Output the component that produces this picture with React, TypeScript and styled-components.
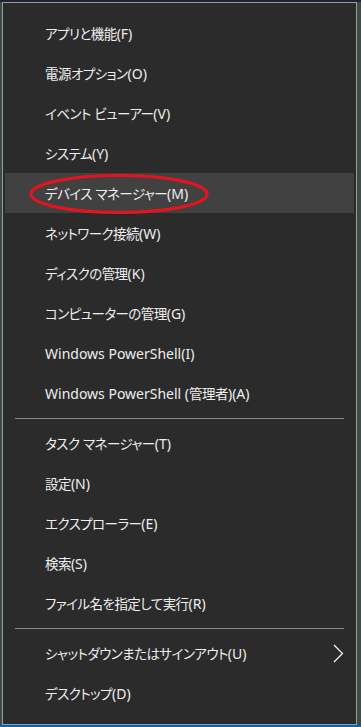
import React from "react";
import styled, { createGlobalStyle } from "styled-components";

const Global = createGlobalStyle`
  html, body { margin: 0; padding: 0; }
  body {
    background: #3f4b45;
    width: 361px;
    height: 727px;
    overflow: hidden;
    font-family: "Noto Sans", "Noto Sans CJK JP", sans-serif;
  }
`;

const Screen = styled.div`
  width: 361px;
  height: 727px;
  box-sizing: border-box;
  padding: 2px 4px 2px 2px;
  background: linear-gradient(to bottom, #1c2430 0, #1c2430 2px, #3f4b45 2px, #3f4b45 725px, #0a63b5 725px);
`;

const Menu = styled.div`
  position: relative;
  box-sizing: border-box;
  width: 355px;
  height: 723px;
  background: #2b2b2b;
  border: 1px solid #9a9a9a;
  padding: 10px 2px 11px 2px;
  display: flex;
  flex-direction: column;
`;

const Item = styled.div<{ $active?: boolean }>`
  height: 40px;
  flex: 0 0 40px;
  display: flex;
  align-items: center;
  justify-content: space-between;
  padding: 0 10px 0 40px;
  background: ${(p) => (p.$active ? "#414141" : "transparent")};
  color: #eeeeee;
  font-size: 14px;
  white-space: nowrap;
`;

const Cjk = styled.span`
  font-family: "Noto Sans CJK JP", sans-serif;
  font-size: 13.5px;
  letter-spacing: -0.55px;
  font-feature-settings: "palt" 1;
`;

const Separator = styled.div`
  flex: 0 0 10px;
  display: flex;
  align-items: center;
  padding: 0 10px 0 10px;
  &::after {
    content: "";
    flex: 1;
    height: 1px;
    background: #8a8a8a;
  }
`;

const Annotation = styled.svg`
  position: absolute;
  left: 24px;
  top: 167px;
  pointer-events: none;
`;

const Chevron = () => (
  <svg width="11" height="19" viewBox="0 0 11 19" fill="none">
    <path d="M1 1 L9.5 9.5 L1 18" stroke="#ffffff" strokeWidth="1.2" />
  </svg>
);

const Label = ({ text }: { text: string }) => (
  <span>
    {text.split(/([\u3000-\u9fff\uff00-\uffef]+)/).map((part, i) =>
      i % 2 === 1 ? <Cjk key={i}>{part}</Cjk> : <React.Fragment key={i}>{part}</React.Fragment>
    )}
  </span>
);

const groups: string[][] = [
  [
    "アプリと機能(F)",
    "電源オプション(O)",
    "イベント ビューアー(V)",
    "システム(Y)",
    "デバイス マネージャー(M)",
    "ネットワーク接続(W)",
    "ディスクの管理(K)",
    "コンピューターの管理(G)",
    "Windows PowerShell(I)",
    "Windows PowerShell (管理者)(A)",
  ],
  [
    "タスク マネージャー(T)",
    "設定(N)",
    "エクスプローラー(E)",
    "検索(S)",
    "ファイル名を指定して実行(R)",
  ],
  ["シャットダウンまたはサインアウト(U)", "デスクトップ(D)"],
];

export default function App() {
  return (
    <>
      <Global />
      <Screen>
        <Menu>
          {groups.map((g, gi) => (
            <React.Fragment key={gi}>
              {gi > 0 && <Separator />}
              {g.map((label) => (
                <Item key={label} $active={label.startsWith("デバイス")}>
                  <Label text={label} />
                  {label.startsWith("シャットダウン") && <Chevron />}
                </Item>
              ))}
            </React.Fragment>
          ))}
          <Annotation width="184" height="48" viewBox="0 0 184 48">
            <ellipse cx="92" cy="24" rx="88" ry="18.5" stroke="#e3141e" strokeWidth="3.2" fill="none" />
          </Annotation>
        </Menu>
      </Screen>
    </>
  );
}
